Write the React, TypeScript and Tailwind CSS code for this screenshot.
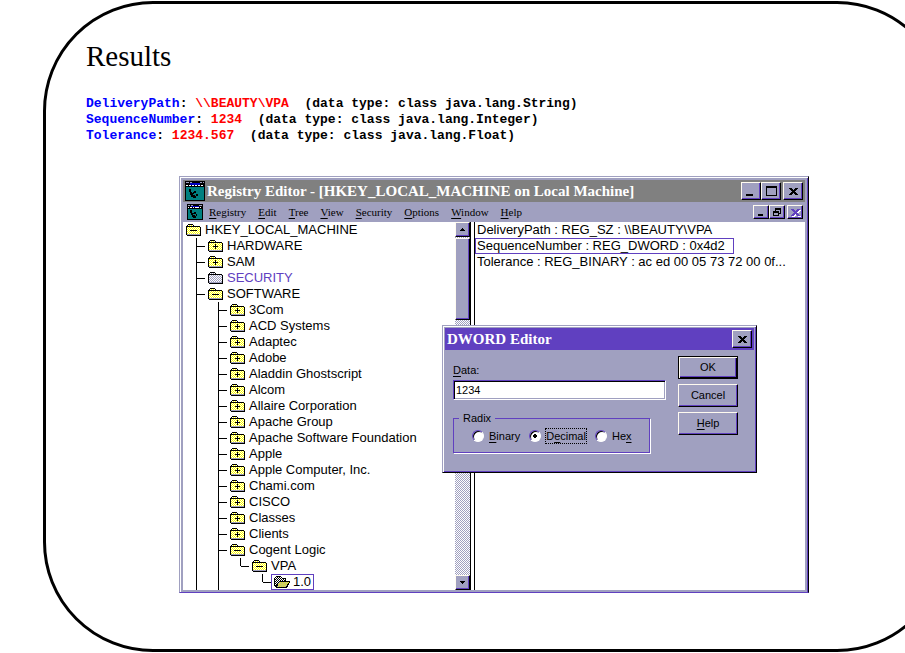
import { useState } from "react";

type Guide = "tee" | "corner" | "line" | "blank";
type Folder = "plus" | "minus" | "locked" | "open";

interface TreeItem {
  name: string;
  icon: Folder;
  guides: Guide[];
}

const vendors = [
  "3Com",
  "ACD Systems",
  "Adaptec",
  "Adobe",
  "Aladdin Ghostscript",
  "Alcom",
  "Allaire Corporation",
  "Apache Group",
  "Apache Software Foundation",
  "Apple",
  "Apple Computer, Inc.",
  "Chami.com",
  "CISCO",
  "Classes",
  "Clients",
];

const tree: TreeItem[] = [
  { name: "HKEY_LOCAL_MACHINE", icon: "minus", guides: [] },
  { name: "HARDWARE", icon: "plus", guides: ["tee"] },
  { name: "SAM", icon: "plus", guides: ["tee"] },
  { name: "SECURITY", icon: "locked", guides: ["tee"] },
  { name: "SOFTWARE", icon: "minus", guides: ["tee"] },
  ...vendors.map((name): TreeItem => ({ name, icon: "plus", guides: ["line", "tee"] })),
  { name: "Cogent Logic", icon: "minus", guides: ["line", "tee"] },
  { name: "VPA", icon: "minus", guides: ["line", "line", "corner"] },
  { name: "1.0", icon: "open", guides: ["line", "line", "blank", "corner"] },
];

const values = [
  "DeliveryPath : REG_SZ : \\\\BEAUTY\\VPA",
  "SequenceNumber : REG_DWORD : 0x4d2",
  "Tolerance : REG_BINARY : ac ed 00 05 73 72 00 0f...",
];

const results = [
  { name: "DeliveryPath", value: "\\\\BEAUTY\\VPA", type: "String" },
  { name: "SequenceNumber", value: "1234", type: "Integer" },
  { name: "Tolerance", value: "1234.567", type: "Float" },
];

const menus = ["Registry", "Edit", "Tree", "View", "Security", "Options", "Window", "Help"];

const bevel =
  "flex items-center justify-center bg-[#a0a0c0] border border-t-[#fffbf0] border-l-[#fffbf0] border-r-black border-b-black shadow-[inset_-1px_-1px_0_#6040c0]";

function FolderIcon({ kind }: { kind: Folder }) {
  if (kind === "open") {
    return (
      <svg width="16" height="12" viewBox="0 0 16 12" shapeRendering="crispEdges" className="shrink-0">
        <defs>
          <pattern id="dots-dark" width="2" height="2" patternUnits="userSpaceOnUse">
            <rect width="2" height="2" fill="#fff" />
            <path d="M0 0h1v1H0zM1 1h1v1H1z" fill="#000" />
          </pattern>
          <pattern id="dots-front" width="2" height="2" patternUnits="userSpaceOnUse">
            <rect width="2" height="2" fill="#a0a0c0" />
            <path d="M0 0h1v1H0zM1 1h1v1H1z" fill="#ff0" />
          </pattern>
        </defs>
        <path d="M1 2V1h1V0h5v1h1v1h4v3h4v1l-3 6H2l-2-2V2z" fill="#000" />
        <path d="M2 1h5v1h1v1h3v2H5L2 9H1V2h1z" fill="url(#dots-dark)" />
        <path d="M5 6h10l-3 5H3z" fill="url(#dots-front)" />
      </svg>
    );
  }
  return (
    <svg width="15" height="12" viewBox="0 0 15 12" shapeRendering="crispEdges" className="shrink-0">
      <defs>
        <pattern id="dots-yellow" width="2" height="2" patternUnits="userSpaceOnUse">
          <rect width="2" height="2" fill="#fff" />
          <path d="M0 0h1v1H0zM1 1h1v1H1z" fill="#ff0" />
        </pattern>
        <pattern id="dots-grey" width="2" height="2" patternUnits="userSpaceOnUse">
          <rect width="2" height="2" fill="#fff" />
          <path d="M0 0h1v1H0zM1 1h1v1H1z" fill="#a0a0c0" />
        </pattern>
      </defs>
      <path d="M2 0h5v1h1v1h6v1h1v9H1v-1H0V2h1V1h1z" fill="#000" />
      <path d="M2 1h5v1H2zM1 3h13v7H1z" fill={kind === "locked" ? "url(#dots-grey)" : "url(#dots-yellow)"} />
      <path d="M1 10h13v1H1z" fill="#a0a0c0" />
      {kind !== "locked" && <path d="M5 6h5v1H5z" fill="#000" />}
      {kind === "minus" && <path d="M4 6h7v1H4z" fill="#000" />}
      {kind === "plus" && <path d="M7 4h1v5H7z" fill="#000" />}
    </svg>
  );
}

function RegeditIcon({ size }: { size: number }) {
  return (
    <svg width={size} height={size} viewBox="0 0 20 20" shapeRendering="crispEdges" className="shrink-0">
      <path d="M0 0h20v20H0z" fill="#000" />
      <path d="M1 6h18v13H1z" fill="#008080" />
      <path d="M1 1h3v1H1zM5 1h2v1H5zM15 1h2v1h-2zM18 1h1v1h-1z" fill="#a0a0c0" />
      <path d="M5 2h10v2H5z" fill="#0000c0" />
      <path d="M1 4h2v1H1zM4 4h2v1H4zM7 4h2v1H7zM10 4h2v1h-2zM13 4h2v1h-2zM16 4h2v1h-2z" fill="#fff" />
      <path d="M4 8h2v3h1v1h1v-1h1v-1h2v2H9v1H8v1h2v1h1v2H8v-1H6v-2H5v-3H4zM11 13h2v2h-2z" fill="#000" />
    </svg>
  );
}

function Cross({ className, size = 11 }: { className: string; size?: number }) {
  return (
    <svg
      width={size}
      height={size - 2}
      viewBox="0 0 11 9"
      shapeRendering="crispEdges"
      className={className}
      fill="currentColor"
    >
      <path d="M1 1h3v1h1v1h1V2h1V1h3v1H9v1H8v1H7v1h1v1h1v1h1v1H7V7H6V6H5v1H4v1H1V7h1V6h1V5h1V4H3V3H2V2H1z" />
    </svg>
  );
}

function GuideCell({ kind }: { kind: Guide }) {
  return (
    <span className="flex h-4 w-[22px] shrink-0 pl-[13px]">
      {kind !== "blank" && (
        <span className={kind === "corner" ? "h-2 w-px bg-black" : "h-4 w-px bg-black"} />
      )}
      {(kind === "tee" || kind === "corner") && <span className="mt-2 h-px w-2 bg-black" />}
    </span>
  );
}

function Scrollbar() {
  return (
    <div className="flex w-[15px] shrink-0 flex-col bg-[repeating-conic-gradient(#a0a0c0_0_25%,#fff_0_50%)] bg-[length:2px_2px]">
      <button aria-label="Scroll up" className={`${bevel} h-[15px] w-full`}>
        <svg width="5" height="3" viewBox="0 0 5 3" shapeRendering="crispEdges">
          <path d="M2 0h1v1h1v1h1v1H0V2h1V1h1z" />
        </svg>
      </button>
      <div className={`${bevel} mt-px h-[82px]`} />
      <button aria-label="Scroll down" className={`${bevel} mt-auto h-[15px] w-full`}>
        <svg width="5" height="3" viewBox="0 0 5 3" shapeRendering="crispEdges">
          <path d="M0 0h5v1H4v1H3v1H2V2H1V1H0z" />
        </svg>
      </button>
    </div>
  );
}

// Label with the accelerator letter underlined
function Accel({ text, at = 0 }: { text: string; at?: number }) {
  return (
    <span>
      {text.slice(0, at)}
      <span className="underline underline-offset-2">{text[at]}</span>
      {text.slice(at + 1)}
    </span>
  );
}

function DwordEditor() {
  const [data, setData] = useState("1234");
  const [radix, setRadix] = useState("Decimal");

  const options = [
    { name: "Binary", at: 0 },
    { name: "Decimal", at: 1 },
    { name: "Hex", at: 2 },
  ];

  return (
    <div
      role="dialog"
      aria-label="DWORD Editor"
      className="absolute top-[148px] left-[262px] w-[315px] border border-t-[#a0a0c0] border-r-black border-b-black border-l-[#a0a0c0] bg-[#a0a0c0] p-0.5 text-[11px] shadow-[inset_1px_1px_0_#fff,inset_-1px_-1px_0_#6040c0]"
    >
      <div className="flex h-[22px] items-center justify-between bg-[#6040c0] pr-0.5 pl-0.5">
        <h2 className="font-['Liberation_Serif',serif] text-[15px] leading-5 font-bold text-white">DWORD Editor</h2>
        <button aria-label="Close" className={`${bevel} h-[18px] w-5`}>
          <Cross className="text-black" />
        </button>
      </div>
      <div className="flex justify-between pt-1.5 pr-4 pb-[17px] pl-2">
        <div>
          <label htmlFor="data" className="block pt-1.5 leading-4">
            <Accel text="Data:" />
          </label>
          <input
            id="data"
            value={data}
            onChange={(e) => setData(e.target.value)}
            className="mt-0.5 block h-5 w-[213px] border border-t-[#6040c0] border-r-white border-b-white border-l-[#6040c0] bg-white px-0.5 leading-4 shadow-[inset_1px_1px_0_#000,inset_-1px_-1px_0_#a0a0c0] outline-none"
          />
          <fieldset className="mt-2.5 h-[43px] w-[197px] border border-[#6040c0] px-1 shadow-[1px_1px_0_#fff]">
            <legend className="ml-px px-1 leading-4">Radix</legend>
            <div className="flex gap-2 pt-0.5 pl-3.5">
              {options.map((o) => (
                <label key={o.name} className="flex items-center gap-1 leading-[14px]">
                  <input
                    type="radio"
                    name="radix"
                    checked={radix === o.name}
                    onChange={() => setRadix(o.name)}
                    className="size-3 appearance-none rounded-full border border-t-[#6040c0] border-r-white border-b-white border-l-[#6040c0] bg-white bg-center bg-no-repeat shadow-[inset_1px_1px_0_#000] checked:bg-[radial-gradient(circle,#000_2px,#fff_2px)]"
                  />
                  <span
                    className={
                      radix === o.name
                        ? "border border-dotted border-black"
                        : "border border-transparent"
                    }
                  >
                    <Accel text={o.name} at={o.at} />
                  </span>
                </label>
              ))}
            </div>
          </fieldset>
        </div>
        <div className="flex flex-col gap-[5px]">
          <button className="flex h-[23px] w-[60px] items-center justify-center border border-black bg-[#a0a0c0] shadow-[inset_1px_1px_0_#fffbf0,inset_-1px_-1px_0_#000,inset_-2px_-2px_0_#6040c0]">
            OK
          </button>
          <button className={`${bevel} h-[23px] w-[60px]`}>Cancel</button>
          <button className={`${bevel} h-[23px] w-[60px]`}>
            <Accel text="Help" />
          </button>
        </div>
      </div>
    </div>
  );
}

function RegistryEditor() {
  return (
    <div className="relative mx-auto mt-8 w-full max-w-[630px] border border-t-[#a0a0c0] border-r-black border-b-[#6040c0] border-l-[#a0a0c0] bg-[#a0a0c0] p-[3px] pb-0.5 shadow-[inset_1px_1px_0_#fff,inset_-1px_0_0_#6040c0]">
      <div className="flex h-[22px] items-center bg-[#808080] pr-0.5 pl-0.5">
        <RegeditIcon size={20} />
        <h2 className="ml-0.5 font-['Liberation_Serif',serif] text-[15px] leading-5 font-bold whitespace-nowrap text-white">
          Registry Editor - [HKEY_LOCAL_MACHINE on Local Machine]
        </h2>
        <div className="ml-auto flex">
          <button aria-label="Minimize" className={`${bevel} h-[18px] w-5`}>
            <span className="mt-2 mr-1 h-0.5 w-[7px] bg-black" />
          </button>
          <button aria-label="Maximize" className={`${bevel} h-[18px] w-5`}>
            <span className="h-2.5 w-[11px] border border-t-2 border-black" />
          </button>
          <button aria-label="Close" className={`${bevel} ml-0.5 h-[18px] w-5`}>
            <Cross className="text-black" />
          </button>
        </div>
      </div>
      <div className="flex h-5 items-center pr-0.5 pl-1">
        <RegeditIcon size={16} />
        <nav className="ml-1.5 flex gap-3 font-['Liberation_Serif',serif] text-[11px] leading-4">
          {menus.map((m) => (
            <button key={m}>
              <Accel text={m} />
            </button>
          ))}
        </nav>
        <div className="ml-auto flex">
          <button aria-label="Minimize document" className={`${bevel} h-3.5 w-4`}>
            <span className="mt-1.5 mr-0.5 h-0.5 w-[5px] bg-black" />
          </button>
          <button aria-label="Restore document" className={`${bevel} h-3.5 w-4`}>
            <svg width="8" height="8" viewBox="0 0 8 8" shapeRendering="crispEdges">
              <path d="M2 0h6v6H6V5h1V2H3v1H2zM0 3h6v5H0zM1 5v2h4V5z" fillRule="evenodd" />
            </svg>
          </button>
          <button aria-label="Close document" className={`${bevel} ml-0.5 h-3.5 w-4`}>
            <Cross className="text-[#6040c0] drop-shadow-[1px_1px_0_#fff]" />
          </button>
        </div>
      </div>
      <div className="flex bg-white text-[13px] leading-4">
        <ul className="w-[272px] shrink-0 overflow-hidden">
          {tree.map((item) => (
            <li key={item.name} className="flex h-4 items-center whitespace-nowrap">
              {item.guides.map((g, i) => (
                <GuideCell key={i} kind={g} />
              ))}
              <span
                className={
                  item.icon === "open"
                    ? "flex h-4 items-center gap-[3px] border border-[#6040c0] px-0.5"
                    : "flex h-4 items-center gap-1 pl-[3px]"
                }
              >
                <FolderIcon kind={item.icon} />
                <span className={item.icon === "locked" ? "text-[#6040c0]" : "text-black"}>{item.name}</span>
              </span>
            </li>
          ))}
        </ul>
        <Scrollbar />
        <div className="w-[5px] shrink-0 border-x border-black bg-white" />
        <ul className="min-w-0 flex-1">
          {values.map((v, i) => (
            <li key={v} className="flex">
              <span
                className={
                  i === 1
                    ? "flex h-4 items-center border border-[#6040c0] pr-2 pl-px whitespace-nowrap"
                    : "flex h-4 items-center border border-transparent pl-px whitespace-nowrap"
                }
              >
                {v}
              </span>
            </li>
          ))}
        </ul>
      </div>
      <DwordEditor />
    </div>
  );
}

export default function App() {
  return (
    <main className="overflow-hidden bg-white pt-px pb-px font-['Liberation_Sans',sans-serif] text-black">
      <section className="-mr-[42px] ml-[43px] rounded-[110px] border-[3px] border-black pt-9 pr-[42px] pb-14 pl-10">
        <h1 className="font-['Liberation_Serif',serif] text-[29px] leading-8">Results</h1>
        <div className="mt-6 font-['Liberation_Mono',monospace] text-[13px] leading-4 font-bold whitespace-pre">
          {results.map((r) => (
            <p key={r.name}>
              <span className="text-[#0000ff]">{r.name}</span>
              {": "}
              <span className="text-[#ff0000]">{r.value}</span>
              {`  (data type: class java.lang.${r.type})`}
            </p>
          ))}
        </div>
        <RegistryEditor />
      </section>
    </main>
  );
}
